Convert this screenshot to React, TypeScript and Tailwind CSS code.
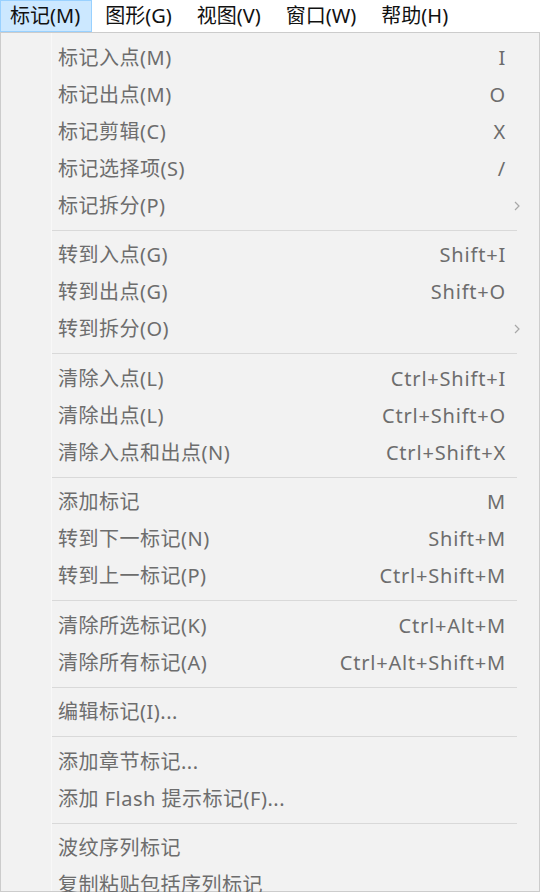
import React from "react";

type Item = { label: string; shortcut?: string; sub?: boolean };
type Group = Item[];

const groups: Group[] = [
  [
    { label: "标记入点(M)", shortcut: "I" },
    { label: "标记出点(M)", shortcut: "O" },
    { label: "标记剪辑(C)", shortcut: "X" },
    { label: "标记选择项(S)", shortcut: "/" },
    { label: "标记拆分(P)", sub: true },
  ],
  [
    { label: "转到入点(G)", shortcut: "Shift+I" },
    { label: "转到出点(G)", shortcut: "Shift+O" },
    { label: "转到拆分(O)", sub: true },
  ],
  [
    { label: "清除入点(L)", shortcut: "Ctrl+Shift+I" },
    { label: "清除出点(L)", shortcut: "Ctrl+Shift+O" },
    { label: "清除入点和出点(N)", shortcut: "Ctrl+Shift+X" },
  ],
  [
    { label: "添加标记", shortcut: "M" },
    { label: "转到下一标记(N)", shortcut: "Shift+M" },
    { label: "转到上一标记(P)", shortcut: "Ctrl+Shift+M" },
  ],
  [
    { label: "清除所选标记(K)", shortcut: "Ctrl+Alt+M" },
    { label: "清除所有标记(A)", shortcut: "Ctrl+Alt+Shift+M" },
  ],
  [{ label: "编辑标记(I)..." }],
  [
    { label: "添加章节标记..." },
    { label: "添加 Flash 提示标记(F)..." },
  ],
  [{ label: "波纹序列标记" }, { label: "复制粘贴包括序列标记" }],
];

const menus = ["标记(M)", "图形(G)", "视图(V)", "窗口(W)", "帮助(H)"];

function Chevron() {
  return (
    <svg width="8" height="12" viewBox="0 0 8 12" className="block">
      <path d="M2 2 L6 6 L2 10" fill="none" stroke="#a8a8a8" strokeWidth="1.2" />
    </svg>
  );
}

export default function App() {
  return (
    <div
      className="w-[543px] h-[892px] overflow-hidden bg-white text-[20px] leading-none"
      style={{ fontFamily: '"Noto Sans", "Noto Sans CJK SC", sans-serif' }}
    >
      <div className="flex h-[32px] items-stretch bg-white">
        {menus.map((m, i) => (
          <div
            key={m}
            className={
              i === 0
                ? "flex items-center pl-[9px] pr-[11px] bg-[#cce8ff] border border-[#99d1ff] text-[#111]"
                : "flex items-center pl-[13px] pr-[12px] text-[#111]"
            }
          >
            {m}
          </div>
        ))}
      </div>
      <div className="w-[540px] h-[860px] bg-[#f2f2f2] border border-[#cccccc] pt-[6px] relative">
        <div className="absolute left-[50px] top-0 bottom-0 w-px bg-[#f8f8f8]" />
        {groups.map((g, gi) => (
          <div key={gi}>
            {gi > 0 && (
              <div className="h-[12.5px] flex items-center pl-[50px] pr-[22px]">
                <div className="h-px w-full bg-[#d9d9d9]" />
              </div>
            )}
            {g.map((it) => (
              <div
                key={it.label}
                className="h-[37px] flex items-center pl-[57px] pr-[33px] text-[#6d6d6d] relative"
              >
                <span className="flex-1 whitespace-pre tracking-[0.5px]">{it.label}</span>
                {it.shortcut && <span className="tracking-[0.8px]">{it.shortcut}</span>}
                {it.sub && (
                  <span className="absolute right-[18px] top-1/2 -translate-y-1/2">
                    <Chevron />
                  </span>
                )}
              </div>
            ))}
          </div>
        ))}
      </div>
    </div>
  );
}
